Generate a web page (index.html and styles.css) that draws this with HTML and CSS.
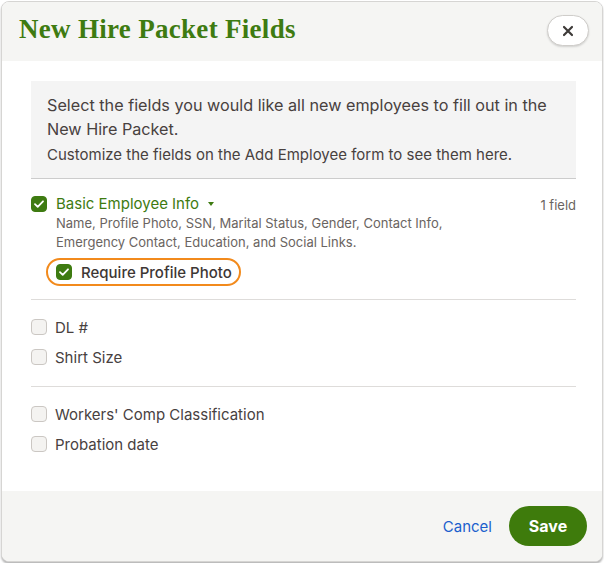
FILE: index.html
```html
<!DOCTYPE html>
<html>
<head>
<meta charset="utf-8">
<link rel="stylesheet" href="styles.css">
</head>
<body>
<div class="modal">
  <div class="header">
    <h1 class="title">New Hire Packet Fields</h1>
    <button class="close" aria-label="Close">
      <svg width="12" height="12" viewBox="0 0 12 12"><path d="M2 2L10 10M10 2L2 10" stroke="#3d3a38" stroke-width="2.2" stroke-linecap="round"/></svg>
    </button>
  </div>
  <div class="body">
    <div class="info">
      <p class="info-main">Select the fields you would like all new employees to fill out in the New Hire Packet.</p>
      <p class="info-sub">Customize the fields on the Add Employee form to see them here.</p>
    </div>
    <div class="group">
      <div class="basic-row">
        <span class="cb checked"><svg width="10" height="8" viewBox="0 0 10 8"><path d="M1 4.2L3.7 6.8L9 1.3" fill="none" stroke="#fff" stroke-width="1.8" stroke-linecap="round" stroke-linejoin="round"/></svg></span>
        <div class="basic-text">
          <div class="basic-label">Basic Employee Info <span class="caret"></span></div>
          <div class="basic-desc">Name, Profile Photo, SSN, Marital Status, Gender, Contact Info,<br>Emergency Contact, Education, and Social Links.</div>
        </div>
        <span class="count">1 field</span>
      </div>
      <div class="require">
        <span class="cb checked"><svg width="10" height="8" viewBox="0 0 10 8"><path d="M1 4.2L3.7 6.8L9 1.3" fill="none" stroke="#fff" stroke-width="1.8" stroke-linecap="round" stroke-linejoin="round"/></svg></span>
        <span class="require-label">Require Profile Photo</span>
      </div>
    </div>
    <div class="group list">
      <label class="item"><span class="cb"></span>DL #</label>
      <label class="item"><span class="cb"></span>Shirt Size</label>
    </div>
    <div class="group list last">
      <label class="item"><span class="cb"></span>Workers' Comp Classification</label>
      <label class="item"><span class="cb"></span>Probation date</label>
    </div>
  </div>
  <div class="footer">
    <a class="cancel">Cancel</a>
    <button class="save">Save</button>
  </div>
</div>
</body>
</html>
```
FILE: styles.css
```css
* { box-sizing: border-box; }
html, body { margin: 0; padding: 0; background: #ffffff; }
body { font-family: Inter, "Noto Sans", sans-serif; color: #48413f; }

.modal {
  margin: 1px;
  width: 602px;
  height: 561px;
  border: 1px solid #d6d5d3;
  border-radius: 8px;
  box-shadow: 0 2px 2px rgba(0,0,0,0.28);
  overflow: hidden;
  display: flex;
  flex-direction: column;
  background: #fff;
}

.header {
  height: 59px;
  background: #f5f5f3;
  display: flex;
  align-items: center;
  justify-content: space-between;
  padding: 0 13px 0 17px;
}
.title {
  margin: 0 0 5px 0;
  font-family: "Liberation Serif", "DejaVu Serif", serif;
  font-weight: 700;
  font-size: 27px;
  color: #3e7b11;
  letter-spacing: 0.3px;
}
.close {
  width: 42px;
  height: 31px;
  border-radius: 16px;
  border: 1px solid #cfcdca;
  background: #fff;
  box-shadow: 0 1px 2px rgba(0,0,0,0.15);
  display: flex;
  align-items: center;
  justify-content: center;
  padding: 0;
  margin-top: -2px;
}

.body {
  flex: 1;
  padding: 20px 26px 0 29px;
}
.info {
  background: #f4f4f4;
  border-bottom: 1px solid #cccccc;
  padding: 12px 16px 12px 16px;
}
.info p { margin: 0; }
.info-main { font-size: 16.2px; line-height: 24px; color: #48413f; }
.info-sub { font-size: 15px; line-height: 22px; color: #48413f; margin-top: 3px !important; }

.group {
  border-bottom: 1px solid #dedcda;
}
.basic-row {
  display: flex;
  align-items: flex-start;
  padding-top: 16px;
}
.cb {
  width: 16px;
  height: 16px;
  border-radius: 4px;
  border: 1px solid #cbc7c3;
  background: #f4f3f1;
  display: inline-flex;
  align-items: center;
  justify-content: center;
  flex: none;
}
.cb.checked {
  background: #3e7b11;
  border-color: #3e7b11;
}
.basic-row .cb { margin-top: 1px; }
.basic-text { flex: 1; padding-left: 9px; }
.basic-label {
  font-size: 15px;
  line-height: 18px;
  color: #3e7b11;
  display: flex;
  align-items: center;
}
.caret {
  display: inline-block;
  width: 0; height: 0;
  border-left: 3.5px solid transparent;
  border-right: 3.5px solid transparent;
  border-top: 4px solid #3e7b11;
  margin-left: 9px;
}
.basic-desc {
  font-size: 13px;
  line-height: 19px;
  color: #6a6461;
  margin-top: 1px;
}
.count {
  font-size: 13px;
  line-height: 18px;
  color: #6a6461;
  margin-top: 1px;
}
.require {
  display: inline-flex;
  align-items: center;
  margin: 6px 0 13px 15px;
  border: 2px solid #f28a1c;
  border-radius: 14px;
  height: 28px;
  padding: 0 7px 0 8px;
}
.require-label {
  font-size: 15px;
  font-weight: 500;
  color: #3d3735;
  margin-left: 9px;
}

.list {
  padding: 12px 0 14px;
}
.list.last { border-bottom: none; }
.item {
  display: flex;
  align-items: center;
  height: 30px;
  font-size: 15px;
  color: #48413f;
}
.item .cb { margin-right: 8px; }

.footer {
  height: 70px;
  background: #f5f5f3;
  display: flex;
  align-items: center;
  justify-content: flex-end;
  padding: 0 15px 0 0;
  gap: 17px;
}
.cancel {
  font-size: 15px;
  color: #1b5fcd;
}
.save {
  width: 78px;
  height: 40px;
  border-radius: 20px;
  border: none;
  background: #3e7b0c;
  color: #fff;
  font-family: Inter, "Noto Sans", sans-serif;
  font-weight: 700;
  font-size: 16px;
  padding: 0;
}
```
